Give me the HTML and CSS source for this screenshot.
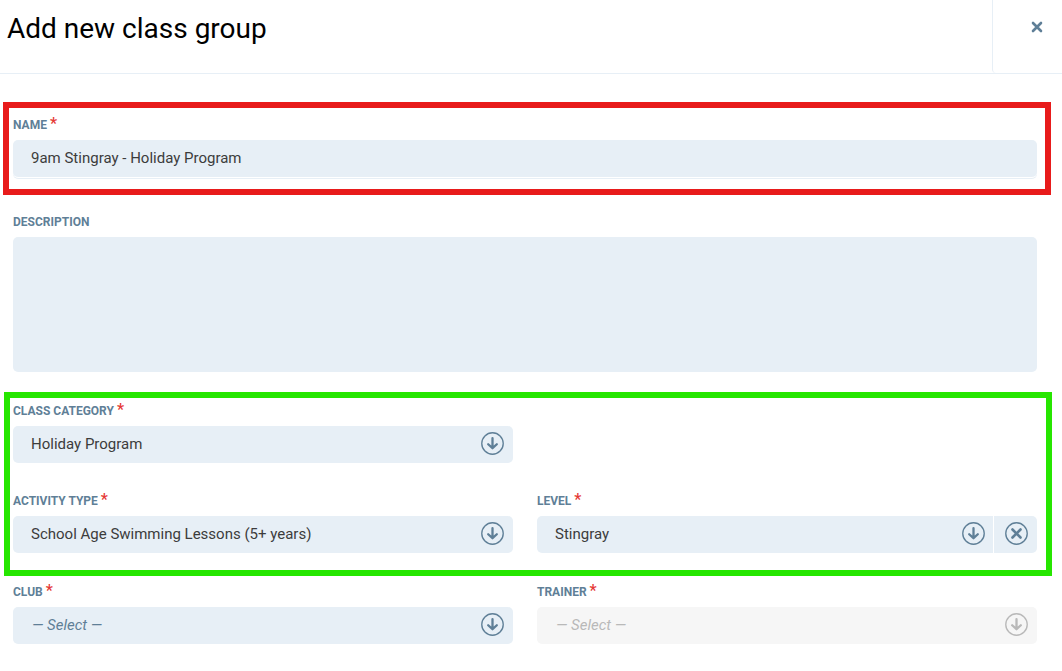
FILE: index.html
```
<!DOCTYPE html>
<html lang="en">
<head>
    <meta charset="UTF-8">
    <meta name="viewport" content="width=device-width, initial-scale=1.0">
    <title>Add new class group</title>
    <link rel="stylesheet" href="styles.css">
</head>
<body>
    <!-- Shared icons -->
    <svg class="icon-defs" aria-hidden="true">
        <symbol id="icon-down" viewBox="0 0 24 24">
            <circle cx="12" cy="12" r="11.2" fill="none" stroke="currentColor" stroke-width="1.4"/>
            <path d="M12 6.4v10.4M7.5 12.8l4.5 4.1 4.5-4.1" fill="none" stroke="currentColor" stroke-width="2.4" stroke-linecap="round" stroke-linejoin="round"/>
        </symbol>
        <symbol id="icon-clear" viewBox="0 0 24 24">
            <circle cx="12" cy="12" r="11.2" fill="none" stroke="currentColor" stroke-width="1.4"/>
            <path d="M7.8 7.8l8.4 8.4M16.2 7.8l-8.4 8.4" fill="none" stroke="currentColor" stroke-width="2.7" stroke-linecap="round"/>
        </symbol>
    </svg>

    <header class="header">
        <h1>Add new class group</h1>
        <button type="button" class="close" aria-label="Close">
            <svg width="12" height="12" viewBox="0 0 12 12" aria-hidden="true">
                <path d="M2 2l8 8M10 2l-8 8" fill="none" stroke="currentColor" stroke-width="2.6" stroke-linecap="round"/>
            </svg>
        </button>
    </header>

    <form class="form">
        <div class="box box-red">
            <div class="field">
                <label for="name">Name<span class="required">*</span></label>
                <div class="control underlined">
                    <input type="text" name="name" id="name" value="9am Stingray - Holiday Program">
                </div>
            </div>
        </div>

        <div class="field description">
            <label for="description">Description</label>
            <textarea name="description" id="description"></textarea>
        </div>

        <div class="box box-green">
            <div class="row">
                <div class="field">
                    <label for="category">Class category<span class="required">*</span></label>
                    <div class="control">
                        <div class="select">
                            <select name="category" id="category">
                                <option>Holiday Program</option>
                            </select>
                            <svg class="icon"><use href="#icon-down"/></svg>
                        </div>
                    </div>
                </div>
            </div>
            <div class="row">
                <div class="field">
                    <label for="activity">Activity type<span class="required">*</span></label>
                    <div class="control">
                        <div class="select">
                            <select name="activity" id="activity">
                                <option>School Age Swimming Lessons (5+ years)</option>
                            </select>
                            <svg class="icon"><use href="#icon-down"/></svg>
                        </div>
                    </div>
                </div>
                <div class="field">
                    <label for="level">Level<span class="required">*</span></label>
                    <div class="control clearable">
                        <div class="select">
                            <select name="level" id="level">
                                <option>Stingray</option>
                            </select>
                            <svg class="icon"><use href="#icon-down"/></svg>
                        </div>
                        <button type="button" class="clear" aria-label="Clear level">
                            <svg class="icon"><use href="#icon-clear"/></svg>
                        </button>
                    </div>
                </div>
            </div>
        </div>

        <div class="row people">
            <div class="field">
                <label for="club">Club<span class="required">*</span></label>
                <div class="control">
                    <div class="select">
                        <select name="club" id="club" class="placeholder">
                            <option value="">— Select —</option>
                        </select>
                        <svg class="icon"><use href="#icon-down"/></svg>
                    </div>
                </div>
            </div>
            <div class="field">
                <label for="trainer">Trainer<span class="required">*</span></label>
                <div class="control">
                    <div class="select disabled">
                        <select name="trainer" id="trainer" class="placeholder" disabled>
                            <option value="">— Select —</option>
                        </select>
                        <svg class="icon"><use href="#icon-down"/></svg>
                    </div>
                </div>
            </div>
        </div>
    </form>
</body>
</html>
```

FILE: styles.css
```
* {
    box-sizing: border-box;
}

body {
    font-family: Roboto, "Liberation Sans", sans-serif;
    background-color: #fff;
    color: #3c3c3c;
    margin: 0;
}

.icon-defs {
    display: none;
}

.header {
    display: flex;
    justify-content: space-between;
    border-bottom: 1px solid #e7eff6;
}

.header h1 {
    margin: 0;
    padding: 13px 7px 28px;
    font-size: 28px;
    line-height: 32px;
    font-weight: 400;
    color: #000;
}

.close {
    width: 70px;
    padding: 0 0 16px 18px;
    border: none;
    border-left: 1px solid #e7eff6;
    border-bottom-left-radius: 4px;
    background: none;
    color: #5f7f97;
    cursor: pointer;
}

.form {
    padding: 28px 10px 27px 3px;
}

/* Highlighted groups */
.box {
    border: 6px solid;
}

.box-red {
    margin-right: 1px;
    padding: 8px 8px 12px 4px;
    border-color: #e81b1b;
}

.box-green {
    display: grid;
    gap: 29px;
    margin-left: 1px;
    padding: 4px 9px 17px 3px;
    border-color: #26e600;
}

.description {
    margin: 18px 15px 20px 10px;
}

.people {
    margin: 7px 15px 0 10px;
}

.row {
    display: grid;
    grid-template-columns: 1fr 1fr;
    gap: 24px;
}

label {
    display: flex;
    gap: 3px;
    height: 18px;
    margin-bottom: 6px;
    font-size: 12px;
    line-height: 18px;
    font-weight: 700;
    text-transform: uppercase;
    color: #5f7f97;
}

.required {
    font-size: 16px;
    line-height: 15px;
    font-weight: 500;
    color: #e53935;
}

input,
select,
textarea {
    display: block;
    width: 100%;
    height: 37px;
    padding: 0 18px 2px;
    border: none;
    border-radius: 5px;
    background-color: #e7eff6;
    font-family: inherit;
    font-size: 15px;
    color: #3c3c3c;
}

textarea {
    height: 135px;
    padding: 10px 18px;
    resize: none;
}

select {
    appearance: none;
    padding-right: 48px;
}

.placeholder {
    padding-left: 19px;
    font-style: italic;
    color: #5f7f97;
}

.underlined {
    border-radius: 5px;
    box-shadow: 0 1px #fff, 0 2px #e7eff6;
}

.select {
    position: relative;
    flex: 1;
    color: #5f7f97;
}

.icon {
    display: block;
    width: 23px;
    height: 23px;
    pointer-events: none;
}

.select .icon {
    position: absolute;
    top: 6px;
    right: 9px;
}

.clearable {
    display: flex;
    gap: 1px;
}

.clearable select {
    border-radius: 5px 0 0 5px;
}

.clearable .select .icon {
    right: 8px;
}

.clear {
    width: 43px;
    padding: 0 9px 2px 11px;
    border: none;
    border-radius: 0 5px 5px 0;
    background-color: #e7eff6;
    color: #5f7f97;
    cursor: pointer;
}

.disabled,
.disabled select {
    color: #b9b9b9;
    opacity: 1;
}

.disabled select {
    background-color: #f6f6f6;
}
```
